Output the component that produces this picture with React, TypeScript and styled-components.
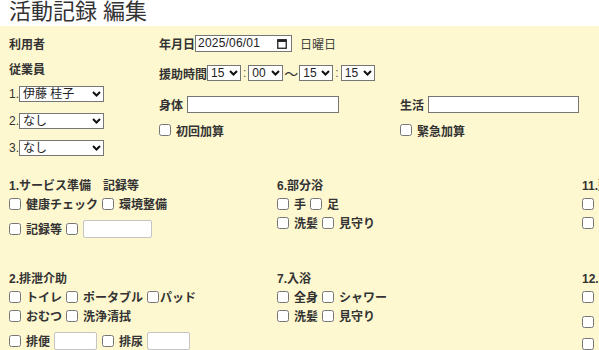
import styled, { createGlobalStyle } from 'styled-components'

const GlobalStyle = createGlobalStyle`
  html, body {
    margin: 0;
    padding: 0;
    background: #fff;
    overflow: hidden;
  }
  body {
    font-family: "Liberation Sans", Arial, "Noto Sans CJK JP", sans-serif;
    font-size: 12px;
    color: #333;
  }
`

const Title = styled.h1`
  margin: 0;
  padding: 0 9px;
  height: 26px;
  font-size: 22px;
  line-height: 24px;
  font-weight: normal;
  color: #333;
  overflow: hidden;
`

const Panel = styled.div`
  background: #fef8d0;
  padding: 8px 9px 40px;
  min-height: 400px;
`

const TopArea = styled.div`
  display: flex;
`

const LeftCol = styled.div`
  width: 150px;
  flex-shrink: 0;
  display: flex;
  flex-direction: column;
`

const MidCol = styled.div`
  flex-shrink: 0;
  display: flex;
  flex-direction: column;
`

interface IRow {
  $mt?: number
  $h?: number
}
const Row = styled.div<IRow>`
  display: flex;
  align-items: center;
  height: ${p => p.$h ?? 18}px;
  margin-top: ${p => p.$mt ?? 0}px;
  white-space: nowrap;
`

const Half = styled.div`
  display: flex;
  align-items: center;
  width: 241px;
`

const Label = styled.span`
  font-weight: bold;
`

// ja 表示の日付欄 (ブラウザのロケールに左右されないよう自前で描く)
const DateBox = styled.div`
  box-sizing: border-box;
  display: inline-flex;
  align-items: center;
  justify-content: space-between;
  width: 97px;
  height: 17px;
  padding: 0 4px 0 2px;
  border: 1px solid #767676;
  background: #fff;
  color: #222;
  font-size: 12px;
  letter-spacing: 0.2px;
`

const DayText = styled.span`
  margin-left: 8px;
  color: #444;
`

const SelectWrap = styled.span`
  position: relative;
  display: inline-flex;
  svg {
    position: absolute;
    right: 3px;
    top: 5px;
    pointer-events: none;
  }
`

interface ISelect {
  $w: number
}
const Select = styled.select<ISelect>`
  appearance: none;
  box-sizing: border-box;
  width: ${p => p.$w}px;
  height: 16px;
  padding: 0 0 0 3px;
  margin: 0;
  border: 1px solid #767676;
  border-radius: 0;
  font-family: "Liberation Sans", Arial, "Noto Sans CJK JP", sans-serif;
  font-size: 12px;
  line-height: 14px;
  background: #fff;
  color: #222;
`

const Chevron = (): JSX.Element => (
  <svg width='9' height='6' viewBox='0 0 9 6'>
    <path d='M1 1l3.5 3.5L8 1' fill='none' stroke='#111' strokeWidth='2' />
  </svg>
)

const CalendarIcon = (): JSX.Element => (
  <svg width='10' height='11' viewBox='0 0 10 11'>
    <rect x='0.75' y='1.75' width='8.5' height='8.5' fill='none' stroke='#222' strokeWidth='1.3' />
    <rect x='0.75' y='1.75' width='8.5' height='2.2' fill='#222' />
  </svg>
)

const Dropdown = ({ w, value, options }: { w: number; value: string; options: string[] }): JSX.Element => (
  <SelectWrap>
    <Select $w={w} defaultValue={value}>
      {options.map(o => <option key={o}>{o}</option>)}
    </Select>
    <Chevron />
  </SelectWrap>
)

const Sep = styled.span`
  padding: 0 2px;
  color: #555;
`

const Wave = styled.span`
  font-size: 14px;
  padding: 0 1px;
`

interface ITextBox {
  $w: number
  $light?: boolean
}
const TextBox = styled.input<ITextBox>`
  box-sizing: border-box;
  width: ${p => p.$w}px;
  height: ${p => (p.$light ? 18 : 17)}px;
  margin: 0 0 0 ${p => (p.$light ? 0 : 4)}px;
  padding: 0 2px;
  border: 1px solid ${p => (p.$light ? '#c4c4c4' : '#767676')};
  border-radius: ${p => (p.$light ? 2 : 0)}px;
  background: #fff;
  font-size: 12px;
`

interface ICheck {
  $tight?: boolean
}
const Check = styled.input.attrs({ type: 'checkbox' })<ICheck>`
  width: 12px;
  height: 12px;
  margin: 0 ${p => (p.$tight ? 1 : 5)}px 0 0;
`

const Item = styled.label`
  display: inline-flex;
  align-items: center;
  font-weight: bold;
  margin-right: 4px;
`

const SectionGrid = styled.div`
  display: grid;
  grid-template-columns: 268px 305px 268px;
  grid-auto-rows: 93px;
  margin-top: 18px;
`

const Section = styled.div`
  display: flex;
  flex-direction: column;
`

const SecRow = styled.div<IRow>`
  display: flex;
  align-items: center;
  height: ${p => p.$h ?? 19}px;
  margin-top: ${p => p.$mt ?? 0}px;
  white-space: nowrap;
`

const SecTitle = styled(SecRow)`
  font-weight: bold;
`

const hours = ['15', '16', '17']
const mins = ['00', '15', '30', '45']
const staff = ['伊藤 桂子', 'なし']

const CheckItem = ({ text, tight }: { text: string; tight?: boolean }): JSX.Element => (
  <Item>
    <Check $tight={tight} />
    {text}
  </Item>
)

const App = (): JSX.Element => {
  return (
    <>
      <GlobalStyle />
      <Title>活動記録 編集</Title>
      <Panel>
        <TopArea>
          <LeftCol>
            <Row><Label>利用者</Label></Row>
            <Row $mt={7}><Label>従業員</Label></Row>
            <Row $mt={8}>
              1.<Dropdown w={85} value='伊藤 桂子' options={staff} />
            </Row>
            <Row $mt={9}>
              2.<Dropdown w={85} value='なし' options={staff} />
            </Row>
            <Row $mt={9}>
              3.<Dropdown w={85} value='なし' options={staff} />
            </Row>
          </LeftCol>
          <MidCol>
            <Row>
              <Label>年月日</Label>
              <DateBox>
                <span>2025/06/01</span>
                <CalendarIcon />
              </DateBox>
              <DayText>日曜日</DayText>
            </Row>
            <Row $mt={12}>
              <Label>援助時間</Label>
              <Dropdown w={34} value='15' options={hours} />
              <Sep>:</Sep>
              <Dropdown w={35} value='00' options={mins} />
              <Wave>〜</Wave>
              <Dropdown w={34} value='15' options={hours} />
              <Sep>:</Sep>
              <Dropdown w={34} value='15' options={mins} />
            </Row>
            <Row $mt={13}>
              <Half>
                <Label>身体</Label>
                <TextBox $w={152} />
              </Half>
              <Half>
                <Label>生活</Label>
                <TextBox $w={151} />
              </Half>
            </Row>
            <Row $mt={8}>
              <Half><CheckItem text='初回加算' /></Half>
              <Half><CheckItem text='緊急加算' /></Half>
            </Row>
          </MidCol>
        </TopArea>

        <SectionGrid>
          <Section>
            <SecTitle>1.サービス準備　記録等</SecTitle>
            <SecRow>
              <CheckItem text='健康チェック' />
              <CheckItem text='環境整備' />
            </SecRow>
            <SecRow $mt={3} $h={25}>
              <CheckItem text='記録等' />
              <Check />
              <TextBox $w={69} $light />
            </SecRow>
          </Section>
          <Section>
            <SecTitle>6.部分浴</SecTitle>
            <SecRow>
              <CheckItem text='手' />
              <CheckItem text='足' />
            </SecRow>
            <SecRow>
              <CheckItem text='洗髪' />
              <CheckItem text='見守り' />
            </SecRow>
          </Section>
          <Section>
            <SecTitle>11.整容</SecTitle>
            <SecRow>
              <CheckItem text='整髪' />
            </SecRow>
            <SecRow>
              <CheckItem text='上衣' />
            </SecRow>
          </Section>

          <Section>
            <SecTitle>2.排泄介助</SecTitle>
            <SecRow>
              <CheckItem text='トイレ' />
              <CheckItem text='ポータブル' />
              <CheckItem text='パッド' tight />
            </SecRow>
            <SecRow>
              <CheckItem text='おむつ' />
              <CheckItem text='洗浄清拭' />
            </SecRow>
            <SecRow $mt={3} $h={25}>
              <CheckItem text='排便' />
              <TextBox $w={43} $light style={{ marginRight: 5 }} />
              <CheckItem text='排尿' />
              <TextBox $w={43} $light />
            </SecRow>
          </Section>
          <Section>
            <SecTitle>7.入浴</SecTitle>
            <SecRow>
              <CheckItem text='全身' />
              <CheckItem text='シャワー' />
            </SecRow>
            <SecRow>
              <CheckItem text='洗髪' />
              <CheckItem text='見守り' />
            </SecRow>
          </Section>
          <Section>
            <SecTitle>12.移動介助</SecTitle>
            <SecRow>
              <CheckItem text='車いす' />
            </SecRow>
            <SecRow $mt={3} $h={25}>
              <Check />
              <TextBox $w={60} $light />
            </SecRow>
            <SecRow>
              <CheckItem text='歩行' />
            </SecRow>
          </Section>
        </SectionGrid>
      </Panel>
    </>
  )
}

export default App
